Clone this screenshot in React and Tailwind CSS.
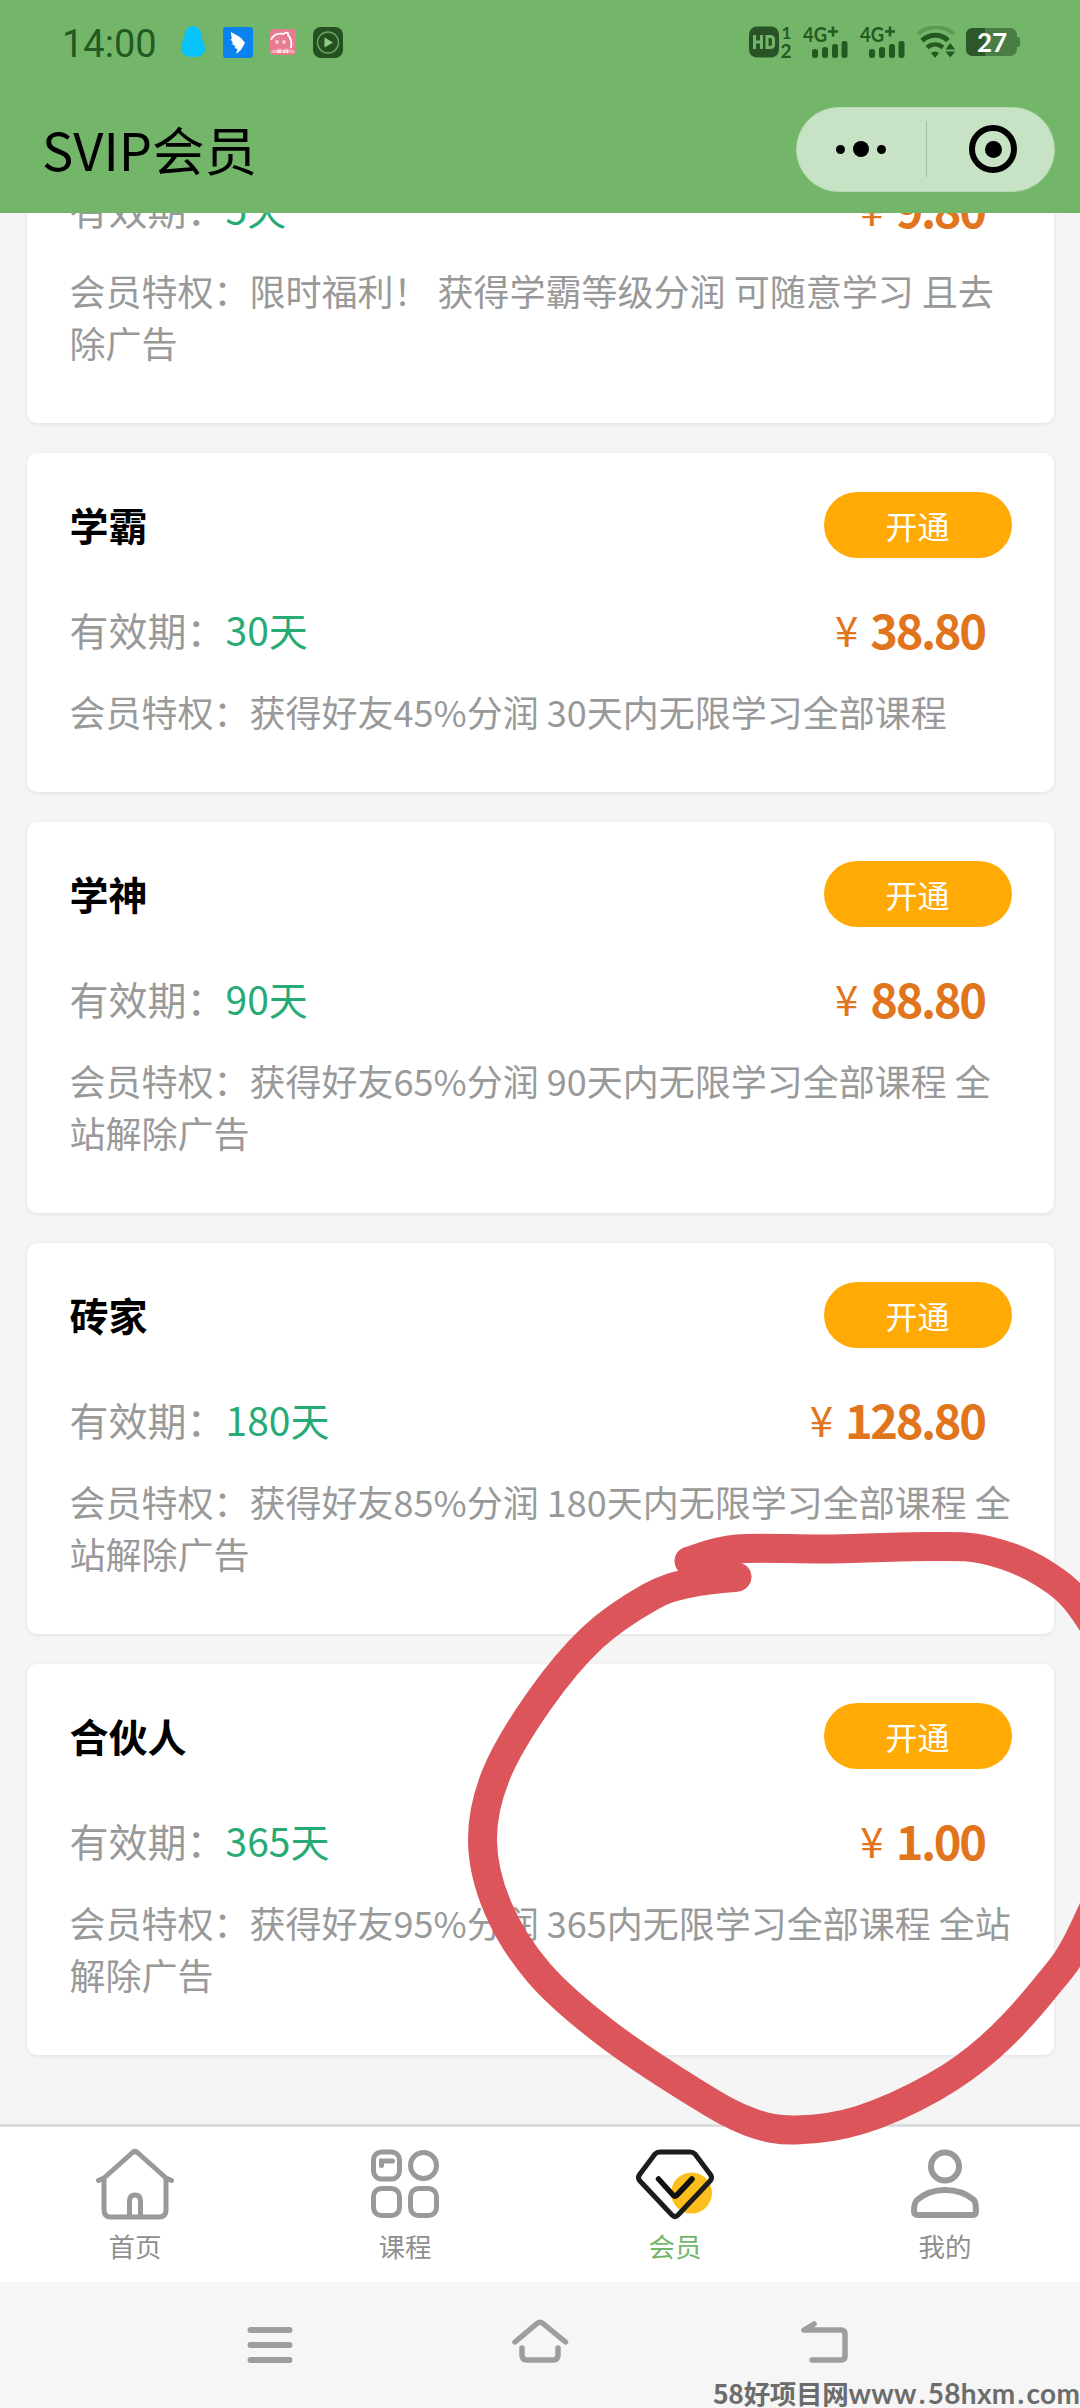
const plans = [
  { name: "体验", days: "5天", price: "9.80", desc: "限时福利！ 获得学霸等级分润 可随意学习 且去除广告" },
  { name: "学霸", days: "30天", price: "38.80", desc: "获得好友45%分润 30天内无限学习全部课程" },
  { name: "学神", days: "90天", price: "88.80", desc: "获得好友65%分润 90天内无限学习全部课程 全站解除广告" },
  { name: "砖家", days: "180天", price: "128.80", desc: "获得好友85%分润 180天内无限学习全部课程 全站解除广告" },
  { name: "合伙人", days: "365天", price: "1.00", desc: "获得好友95%分润 365内无限学习全部课程 全站解除广告" },
];

const Signal = () => (
  <svg className="h-[32px] w-[46px] overflow-visible" viewBox="0 0 46 32" fill="#245a22">
    <text x="0" y="16" fontSize="21" fontWeight="700" fontFamily="Lato, sans-serif" textLength="24" lengthAdjust="spacingAndGlyphs">4G</text>
    <path d="M25 5.500h10M30 0.500v10" stroke="#245a22" strokeWidth="2.600" />
    <rect x="9" y="23" width="6" height="9" rx="2.500" />
    <rect x="19" y="21" width="6" height="11" rx="2.500" />
    <rect x="29" y="18" width="6" height="14" rx="2.500" />
    <rect x="38.500" y="15" width="6" height="17" rx="2.500" />
  </svg>
);

const StatusBar = () => (
  <div className="flex h-[84px] items-center pl-[62px] pr-[60px] text-[#245a22]">
    <span className="w-[95px] pt-[3px] font-['Roboto',sans-serif] text-[38px] leading-none">14:00</span>
    <svg className="ml-[22px] h-[32px] w-[28px]" viewBox="0 0 28 32" fill="#06c3fb">
      <path d="M14 0C8 0 6 5 5 12c-.5 3-3 6-3 11 0 3 1 4 2 4 1 3 5 4 10 4s9-1 10-4c1 0 2-1 2-4 0-5-2.500-8-3-11-1-7-3-12-9-12z" />
    </svg>
    <svg className="ml-[16px] h-[31px] w-[30px]" viewBox="0 0 30 31">
      <rect width="30" height="31" rx="3" fill="#0a83ee" />
      <path d="M8 5c5 3 8 4 11 7l3 4-4 7-5 4 1.500-5-3-1 1-1.500-4-3 1.500-.500-2.500-4 1.500-.500C8.500 10 8 7.500 8 5z" fill="#fff" />
    </svg>
    <svg className="ml-[17px] h-[26px] w-[26px]" viewBox="0 0 26 26">
      <rect width="26" height="26" rx="4" fill="#e87a91" />
      <path d="M1 11C3 6 8 4 14 5M14 5c1-2 5-2 4 1 3 3 4 7 3 13" fill="none" stroke="#fff" strokeWidth="1.800" />
      <circle cx="7" cy="13" r="2" fill="#f9ccd5" />
      <circle cx="14" cy="13" r="2" fill="#f9ccd5" />
      <path d="M1 24c0-4 4-4 5-3 2-2 5-2 7 0 2-2 6-2 7 0 2-1 5 0 5 3z" fill="#f7a9b8" />
      <path d="M8 21v3M10 21v3M14 21v3M17 21v3" stroke="#fff" strokeWidth="1.400" />
    </svg>
    <svg className="ml-[17px] h-[31px] w-[30px]" viewBox="0 0 30 31">
      <rect width="30" height="31" rx="8" fill="#24511f" />
      <circle cx="15" cy="15.500" r="10.500" fill="none" stroke="#6da566" strokeWidth="1.300" />
      <path d="M11.500 10.500v10l8.500-5z" fill="#8fca87" />
    </svg>

    <div className="ml-auto flex items-center">
      <svg className="h-[32px] w-[43px] overflow-visible" viewBox="0 0 43 32">
        <rect y="0.500" width="30" height="31" rx="8" fill="#295326" />
        <path d="M5.500 9v14M12.500 9v14M5.500 16h7M18 10.500v11h3q3.500 0 3.500-3v-5q0-3-3.500-3z" fill="none" stroke="#73b66a" strokeWidth="3" />
        <text x="32.500" y="13" fontSize="17" fontWeight="700" fontFamily="Lato, sans-serif" fill="#245a22">1</text>
        <text x="31.500" y="31.500" fontSize="19" fontWeight="700" fontFamily="Lato, sans-serif" fill="#245a22">2</text>
      </svg>
      <div className="ml-[11px] flex gap-[11px]">
        <Signal />
        <Signal />
      </div>
      <svg className="ml-[11px] h-[32px] w-[40px]" viewBox="0 0 40 32" fill="none">
        <path d="M1 8C11-1 27-1 37 8" stroke="#5c9a54" strokeWidth="4" />
        <path d="M5 14.500C13 7.500 24 7.500 31 14.500" stroke="#245a22" strokeWidth="5" />
        <path d="M10 21.500C15 17.500 21 17.500 26 21.500" stroke="#245a22" strokeWidth="4.500" />
        <path d="M14 27q4-3 8 0l-4 5z" fill="#245a22" />
        <path d="M28.500 23.500l4.800-6.500 4.800 6.500zM28.500 25.500l4.800 6 4.800-6z" fill="#245a22" />
      </svg>
      <svg className="ml-[9px] h-[28px] w-[54px] overflow-visible" viewBox="0 0 54 28">
        <rect x="0" y="0" width="51" height="28" rx="7" fill="#4a7d44" />
        <path d="M7 0h12v28H7q-7 0-7-7V7q0-7 7-7z" fill="#2c5728" />
        <path d="M51 9h1q2 0 2 2v6q0 2-2 2h-1z" fill="#4a7d44" />
        <text x="26" y="23.500" textAnchor="middle" fontSize="26" fontWeight="700" fontFamily="Lato, sans-serif" fill="#fff">27</text>
      </svg>
    </div>
  </div>
);

const Capsule = () => (
  <div className="flex h-[85px] w-[259px] items-center rounded-full border border-[#b5dbb0] bg-[#c7e2c4]">
    <div className="flex w-[129px] items-center justify-center gap-[8px] pr-[2px]">
      <span className="size-[9px] rounded-full bg-black" />
      <span className="size-[16px] rounded-full bg-black" />
      <span className="size-[9px] rounded-full bg-black" />
    </div>
    <div className="h-[56px] w-px bg-[#9cc297]" />
    <div className="flex flex-1 items-center justify-center pl-[5px]">
      <div className="flex size-[48px] items-center justify-center rounded-full border-[6px] border-black">
        <span className="size-[17px] rounded-full bg-black" />
      </div>
    </div>
  </div>
);

const PlanCard = ({ plan }) => (
  <div className="shrink-0 rounded-[10px] bg-white pt-[39px] pr-[42px] pb-[55px] pl-[43px] shadow-[0_1px_4px_rgba(0,0,0,0.09)]">
    <div className="flex h-[66px] items-center justify-between">
      <h2 className="pb-[2px] text-[39px] leading-none font-bold text-black">{plan.name}</h2>
      <button className="h-[66px] w-[188px] rounded-full bg-[#ffaa05] text-[32px] leading-none text-white">
        开通
      </button>
    </div>
    <div className="mt-[45px] flex h-[52px] items-center justify-between pr-[27px] leading-[52px]">
      <div className="text-[39px] text-[#999]">
        有效期：<span className="text-[#27ab76]">{plan.days}</span>
      </div>
      <div className="flex items-center text-[#e1751d]">
        <span className="text-[42px]">¥</span>
        <span className="ml-[12px] text-[47px] font-bold tracking-[-2.400px]">{plan.price}</span>
      </div>
    </div>
    <p className="mt-[30px] text-[36px] leading-[52px] text-[#999]">会员特权：{plan.desc}</p>
  </div>
);

const HomeIcon = () => (
  <svg className="h-[72px] w-[78px]" viewBox="0 0 78 72" fill="none" stroke="#999" strokeWidth="5" strokeLinecap="round" strokeLinejoin="round">
    <path d="M2.500 32.500L8 30 36 5q3-3 6 0l28 25 5.500 2.500" />
    <path d="M8 31v31q0 7 7 7h48q7 0 7-7V31" />
    <path d="M33.500 68V53q0-6 5.500-6t5.500 6v15" />
  </svg>
);

const CourseIcon = () => (
  <svg className="h-[72px] w-[68px]" viewBox="0 0 68 72" fill="none" stroke="#999" strokeWidth="5">
    <rect x="2.500" y="4" width="26" height="27" rx="8" />
    <circle cx="52.500" cy="17.500" r="13" />
    <rect x="2.500" y="40.500" width="26" height="27" rx="8" />
    <rect x="39.500" y="40.500" width="26" height="27" rx="8" />
    <path d="M10.500 17.500v-4.500h11" strokeLinecap="round" />
  </svg>
);

const VipIcon = () => (
  <svg className="h-[72px] w-[78px]" viewBox="0 0 78 72" fill="none" strokeLinecap="round" strokeLinejoin="round">
    <circle cx="55.500" cy="45" r="20.500" fill="#fcbf1e" />
    <path d="M24 4h30q3 0 5 2l15 20q3 3.500 0 7L42 67q-3 3-6 0L4 33q-3-3.500 0-7L19 6q2-2 5-2z" stroke="#1c1c1c" strokeWidth="5" />
    <path d="M22.500 31L37 47q2 2 4 0l15-16" stroke="#111" strokeWidth="5.500" />
  </svg>
);

const MineIcon = () => (
  <svg className="h-[72px] w-[68px]" viewBox="0 0 68 72" fill="none" stroke="#999" strokeWidth="6" strokeLinejoin="round">
    <circle cx="34" cy="18.500" r="14" />
    <path d="M34 42c13 0 22 4 29 10 2 3 2 7.500 2 12q-.500 3-4 3H7q-4 0-4-4c0-4 0-8 3-11 7-6 15-10 28-10z" />
  </svg>
);

const tabs = [
  { label: "首页", Icon: HomeIcon },
  { label: "课程", Icon: CourseIcon },
  { label: "会员", Icon: VipIcon, active: true },
  { label: "我的", Icon: MineIcon },
];

const TabBar = () => (
  <nav className="grid h-[158px] shrink-0 grid-cols-4 border-t-[3px] border-[#dcdcdc] bg-white">
    {tabs.map(({ label, Icon, active }) => (
      <div key={label} className="flex flex-col items-center pt-[21px]">
        <Icon />
        <span className={`mt-[8px] text-[26.500px] leading-[36px] ${active ? "text-[#73b66a]" : "text-[#8f8f8f]"}`}>{label}</span>
      </div>
    ))}
  </nav>
);

const SystemNav = () => (
  <div className="relative h-[126px] shrink-0 bg-[#f6f6f6] pt-[36px]">
    <div className="flex items-start pl-[247px]">
      <svg className="h-[46px] w-[46px]" viewBox="0 0 46 46" stroke="#9e9e9e" strokeWidth="6" strokeLinecap="round">
        <path d="M3.500 12h39M3.500 27h39M3.500 42h39" />
      </svg>
      <svg className="ml-[218px] h-[46px] w-[58px]" viewBox="0 0 58 46" fill="none" stroke="#9e9e9e" strokeWidth="5.500" strokeLinecap="round">
        <path d="M4 24L26 5.500q3-2.500 6 0L54.500 24" />
        <path d="M11 30v7q0 5 5 5h26q5 0 5-5v-7" />
      </svg>
      <svg className="ml-[231px] h-[46px] w-[50px]" viewBox="0 0 50 46" fill="none" stroke="#9e9e9e" strokeWidth="5.500" strokeLinecap="round" strokeLinejoin="round">
        <path d="M14 6L4 12h37q4 0 4 4v22q0 4-4 4H12" />
      </svg>
    </div>
    {/* Site watermark */}
    <div className="absolute right-0 bottom-0 flex w-[367px] items-end leading-[30px] font-bold whitespace-nowrap text-[#6c6c6c]">
      <span className="text-[26.500px] tracking-[-0.300px]">58好项目网</span>
      <span className="font-['Lato',sans-serif] text-[28px] tracking-[0.300px]">
        www<span className="mx-[2px]">.</span>58hxm<span className="mx-[2px]">.</span>com
      </span>
    </div>
  </div>
);

const loop = [
  [689, 1561], [737, 1549], [828, 1549], [930, 1546.5], [986, 1550], [1043, 1573], [1084, 1611], [1122, 1690],
  [1124, 1820], [1082, 1933], [1045, 1988], [990, 2047], [934, 2087], [860, 2120], [796, 2130], [750, 2122],
  [697, 2094], [606, 2033], [539, 1973], [498, 1908], [482.5, 1841], [496, 1775], [539, 1701], [592, 1638],
  [650, 1597], [690, 1583], [737, 1577],
];

// Catmull-Rom spline through the points
const smoothPath = (pts) => {
  let d = `M${pts[0][0]} ${pts[0][1]}`;
  for (let i = 0; i < pts.length - 1; i++) {
    const p0 = pts[i - 1] || pts[i];
    const p1 = pts[i];
    const p2 = pts[i + 1];
    const p3 = pts[i + 2] || p2;
    d += `C${p1[0] + (p2[0] - p0[0]) / 6} ${p1[1] + (p2[1] - p0[1]) / 6} ${p2[0] - (p3[0] - p1[0]) / 6} ${p2[1] - (p3[1] - p1[1]) / 6} ${p2[0]} ${p2[1]}`;
  }
  return d;
};

// Hand drawn loop around the last plan
const Marker = () => (
  <svg className="pointer-events-none absolute top-[1500px] left-[440px] h-[680px] w-[640px]" viewBox="440 1500 640 680" fill="none" stroke="#dc555b" strokeWidth="29" strokeLinecap="round" strokeLinejoin="round">
    <path d={smoothPath(loop)} />
  </svg>
);

const App = () => {
  return (
    <div className="relative flex h-[2408px] w-[1080px] flex-col overflow-hidden bg-[#f5f5f5] font-['Noto_Sans_CJK_SC',sans-serif]">
      <header className="h-[213px] shrink-0 bg-[#73b66a]">
        <StatusBar />
        <div className="flex h-[130px] items-center justify-between pr-[25px] pl-[42px]">
          <h1 className="pb-[1px] text-[52.500px] leading-none text-black">SVIP会员</h1>
          <Capsule />
        </div>
      </header>

      <main className="flex min-h-0 flex-1 flex-col justify-end gap-[30px] overflow-hidden px-[26.500px] pb-[69px]">
        {plans.map((plan) => (
          <PlanCard key={plan.name} plan={plan} />
        ))}
      </main>

      <TabBar />
      <SystemNav />
      <Marker />
    </div>
  );
};

export default App;
